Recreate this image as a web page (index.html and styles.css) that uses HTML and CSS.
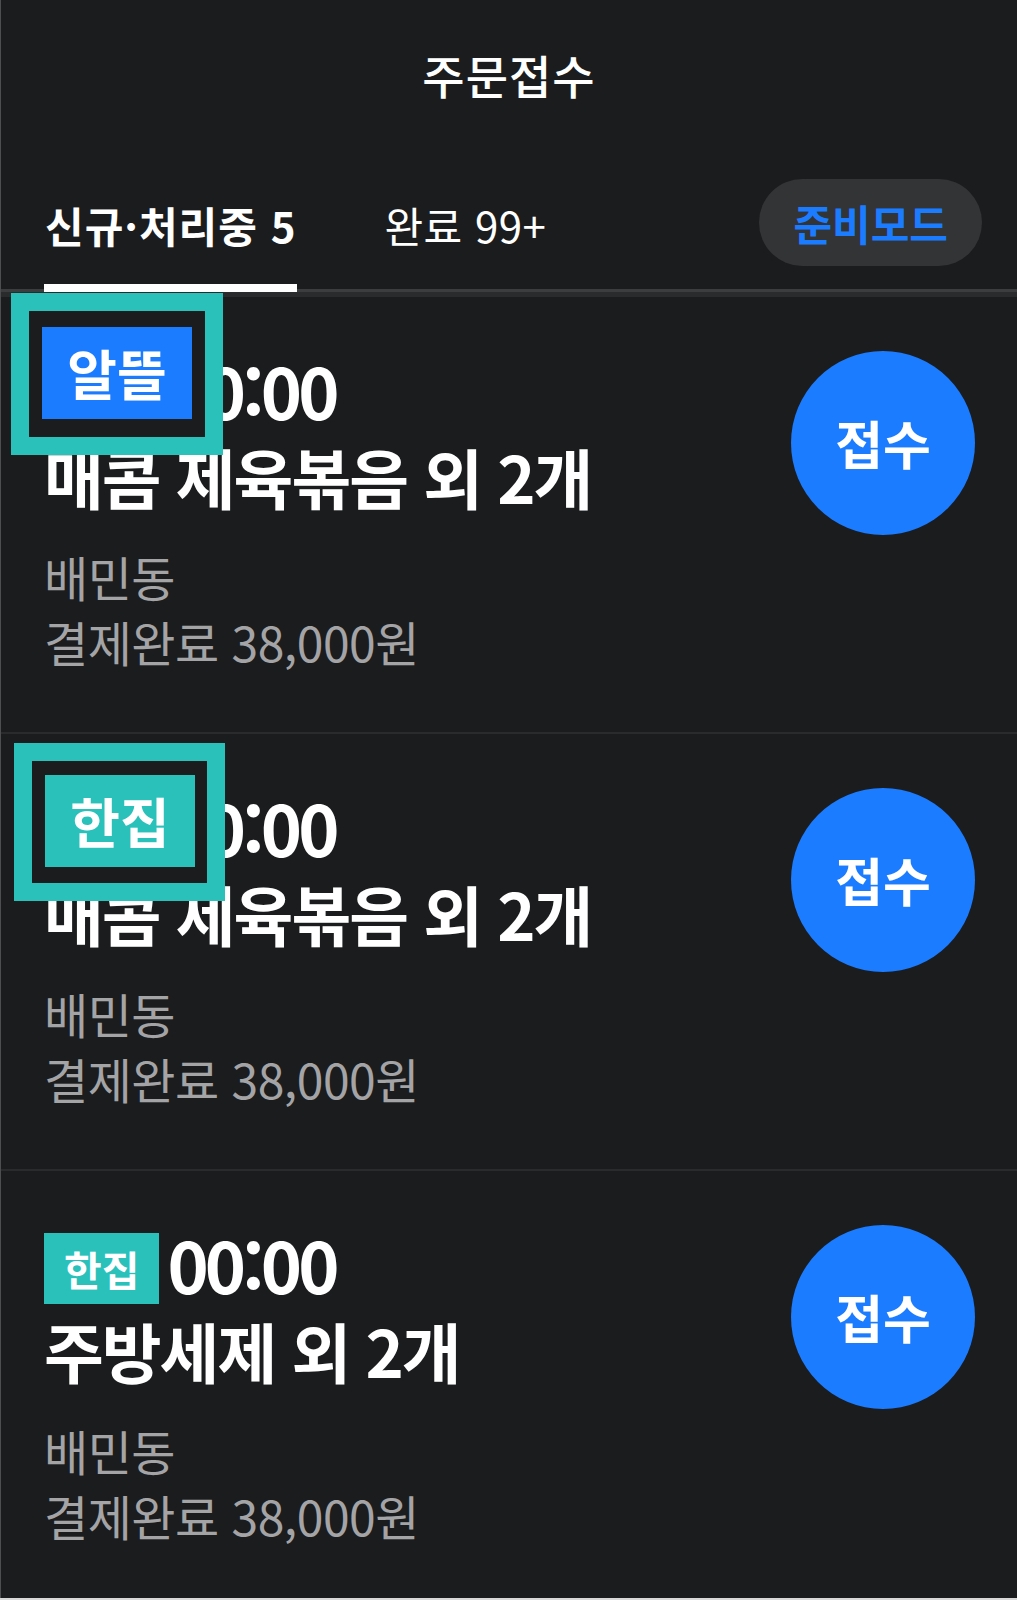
FILE: index.html
```html
<!DOCTYPE html>
<html lang="ko">
<head>
<meta charset="utf-8">
<title>주문접수</title>
<link rel="stylesheet" href="styles.css">
</head>
<body>
<div class="app">
  <header class="topbar">
    <h1 class="title">주문접수</h1>
  </header>
  <nav class="tabs">
    <div class="tab tab--active">신규·처리중 5</div>
    <div class="tab">완료 99+</div>
    <button class="mode-btn">준비모드</button>
  </nav>
  <ul class="orders">
    <li class="order">
      <div class="order-info">
        <div class="order-head"><span class="badge badge--blue">알뜰</span><span class="time">00:00</span></div>
        <div class="order-title">매콤 제육볶음 외 2개</div>
        <div class="order-meta">배민동</div>
        <div class="order-meta order-meta--pay">결제완료 38,000원</div>
      </div>
      <button class="accept">접수</button>
      <div class="callout callout--a"><span class="badge badge--blue badge--lg">알뜰</span></div>
    </li>
    <li class="order">
      <div class="order-info">
        <div class="order-head"><span class="badge badge--teal">한집</span><span class="time">00:00</span></div>
        <div class="order-title">매콤 제육볶음 외 2개</div>
        <div class="order-meta">배민동</div>
        <div class="order-meta order-meta--pay">결제완료 38,000원</div>
      </div>
      <button class="accept">접수</button>
      <div class="callout callout--b"><span class="badge badge--teal badge--lg">한집</span></div>
    </li>
    <li class="order">
      <div class="order-info">
        <div class="order-head"><span class="badge badge--teal">한집</span><span class="time">00:00</span></div>
        <div class="order-title">주방세제 외 2개</div>
        <div class="order-meta">배민동</div>
        <div class="order-meta order-meta--pay">결제완료 38,000원</div>
      </div>
      <button class="accept">접수</button>
    </li>
  </ul>
</div>
</body>
</html>
```
FILE: styles.css
```css
html, body {
  margin: 0;
  padding: 0;
  background: #d9d9d9;
}

.app {
  width: 1017px;
  height: 1598px;
  box-sizing: border-box;
  background: #1b1c1e;
  border-left: 1px solid #4d4e50;
  overflow: hidden;
  font-family: "Noto Sans CJK KR", "Noto Sans", sans-serif;
  color: #fff;
}

.topbar {
  height: 147px;
  display: flex;
  align-items: center;
  justify-content: center;
}

.title {
  margin: 0;
  font-size: 46px;
  font-weight: 500;
  line-height: 1;
  letter-spacing: 1px;
}

.tabs {
  height: 145px;
  box-sizing: border-box;
  display: flex;
  align-items: flex-end;
  padding: 0 35px 0 43px;
  border-bottom: 3px solid #3c3d3f;
}

.tab {
  font-size: 42px;
  font-weight: 400;
  line-height: 1;
  letter-spacing: 0.5px;
  white-space: nowrap;
  padding: 0 1px 38px;
  margin-bottom: -3px;
  border-bottom: 8px solid transparent;
}

.tab--active {
  font-weight: 700;
  letter-spacing: 1px;
  border-bottom-color: #fff;
}

.tab + .tab {
  margin-left: 86px;
}

.mode-btn {
  margin-left: auto;
  margin-bottom: 23px;
  height: 87px;
  padding: 0 34px;
  border: 0;
  border-radius: 44px;
  background: #333436;
  color: #1b7cff;
  font: 700 42px/1 "Noto Sans CJK KR", "Noto Sans", sans-serif;
  letter-spacing: 0;
}

.orders {
  list-style: none;
  margin: 0;
  padding: 0;
  border-top: 5px solid #2a2b2d;
}

.order {
  position: relative;
  display: flex;
  justify-content: space-between;
  align-items: flex-start;
  height: 437px;
  box-sizing: border-box;
  padding: 0 42px 0 43px;
  border-bottom: 2px solid #2a2b2d;
}

.order-head {
  display: flex;
  align-items: center;
  height: 71px;
  margin-top: 62px;
}

.badge {
  display: flex;
  align-items: center;
  height: 71px;
  box-sizing: border-box;
  padding: 0 20px;
  font-size: 41px;
  font-weight: 700;
  line-height: 1;
  color: #fff;
}

.badge--blue {
  background: #1b7cff;
}

.badge--teal {
  background: #2ac1bb;
}

.time {
  margin-left: 8px;
  margin-bottom: 10px;
  font-size: 70px;
  font-weight: 700;
  line-height: 1;
  letter-spacing: -4px;
}

.order-title {
  margin-top: 14px;
  font-size: 65px;
  font-weight: 700;
  line-height: 1;
  letter-spacing: -2px;
  white-space: nowrap;
}

.order-meta {
  margin-top: 43px;
  font-size: 48px;
  font-weight: 400;
  line-height: 1;
  letter-spacing: -0.5px;
  color: #a4a4a6;
}

.order-meta--pay {
  margin-top: 17px;
}

.accept {
  flex-shrink: 0;
  margin-top: 54px;
  width: 184px;
  height: 184px;
  padding: 0;
  border: 0;
  border-radius: 50%;
  background: #1b7cff;
  color: #fff;
  font: 700 52px/1 "Noto Sans CJK KR", "Noto Sans", sans-serif;
  letter-spacing: 0;
}

.callout {
  position: absolute;
  border: 18px solid #2ac1bb;
  padding: 16px 13px 18px;
  background: #1b1c1e;
}

.callout--a {
  left: 10px;
  top: -4px;
}

.callout--b {
  left: 13px;
  top: 9px;
  padding: 14px 12px 16px 13px;
}

.badge--lg {
  width: 150px;
  height: 92px;
  padding: 0;
  justify-content: center;
  font-size: 54px;
}
```
